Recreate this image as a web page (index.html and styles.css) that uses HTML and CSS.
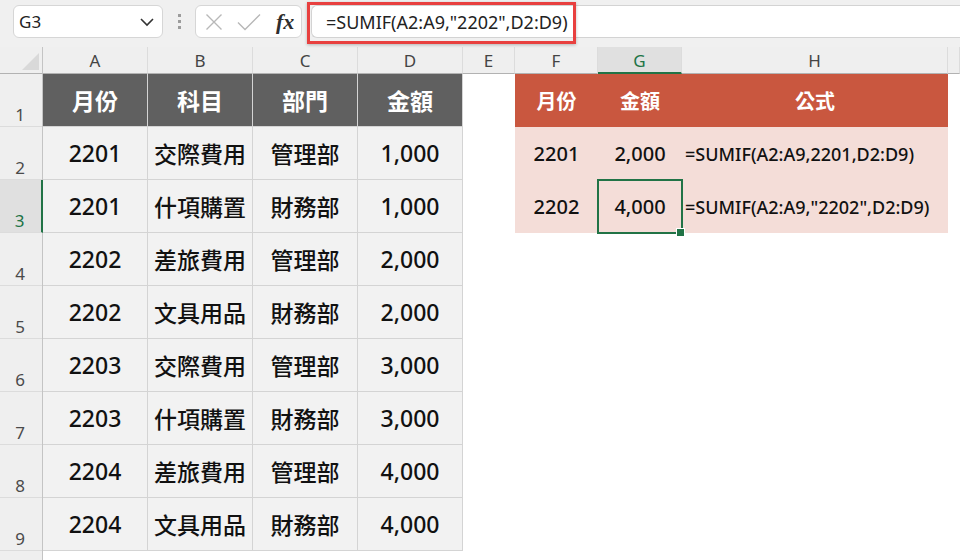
FILE: index.html
```html
<!DOCTYPE html>
<html>
<head>
<meta charset="utf-8">
<link rel="stylesheet" href="styles.css">
</head>
<body>
<div class="app">
  <div class="toolbar">
    <div class="namebox">
      <span class="nb-text">G3</span>
      <svg class="chev" width="16" height="10" viewBox="0 0 16 10"><path d="M2 2 L8 8 L14 2" fill="none" stroke="#333" stroke-width="1.6"/></svg>
    </div>
    <div class="grip"><i></i><i></i><i></i></div>
    <div class="fxgroup">
      <svg width="18" height="18" viewBox="0 0 18 18"><path d="M1.5 1.5 L16.5 16.5 M16.5 1.5 L1.5 16.5" stroke="#b8b8b8" stroke-width="1.4" fill="none"/></svg>
      <svg width="24" height="18" viewBox="0 0 24 18"><path d="M1 9.5 L8 16.5 L23 1.5" stroke="#b8b8b8" stroke-width="1.4" fill="none"/></svg>
      <span class="fx">fx</span>
    </div>
    <div class="formula">=SUMIF(A2:A9,"2202",D2:D9)</div>
    <div class="highlight"></div>
  </div>

  <div class="colheads">
    <div class="corner"><span class="tri"></span></div>
    <div class="ch">A</div>
    <div class="ch">B</div>
    <div class="ch">C</div>
    <div class="ch">D</div>
    <div class="ch">E</div>
    <div class="ch">F</div>
    <div class="ch sel">G</div>
    <div class="ch">H</div>
    <div class="ch"></div>
  </div>

  <div class="body">
    <div class="rowheads">
      <div class="rh">1</div>
      <div class="rh">2</div>
      <div class="rh sel">3</div>
      <div class="rh">4</div>
      <div class="rh">5</div>
      <div class="rh">6</div>
      <div class="rh">7</div>
      <div class="rh">8</div>
      <div class="rh">9</div>
      <div class="rh last"></div>
    </div>
    <div class="cells">
      <div class="ltable">
        <div class="c h">月份</div><div class="c h">科目</div><div class="c h">部門</div><div class="c h">金額</div>
        <div class="c">2201</div><div class="c">交際費用</div><div class="c">管理部</div><div class="c">1,000</div>
        <div class="c">2201</div><div class="c">什項購置</div><div class="c">財務部</div><div class="c">1,000</div>
        <div class="c">2202</div><div class="c">差旅費用</div><div class="c">管理部</div><div class="c">2,000</div>
        <div class="c">2202</div><div class="c">文具用品</div><div class="c">財務部</div><div class="c">2,000</div>
        <div class="c">2203</div><div class="c">交際費用</div><div class="c">管理部</div><div class="c">3,000</div>
        <div class="c">2203</div><div class="c">什項購置</div><div class="c">財務部</div><div class="c">3,000</div>
        <div class="c">2204</div><div class="c">差旅費用</div><div class="c">管理部</div><div class="c">4,000</div>
        <div class="c">2204</div><div class="c">文具用品</div><div class="c">財務部</div><div class="c">4,000</div>
      </div>
      <div class="rtable">
        <div class="r h">月份</div><div class="r h">金額</div><div class="r h">公式</div>
        <div class="r">2201</div><div class="r">2,000</div><div class="r f">=SUMIF(A2:A9,2201,D2:D9)</div>
        <div class="r">2202</div><div class="r">4,000</div><div class="r f">=SUMIF(A2:A9,"2202",D2:D9)</div>
      </div>
      <div class="selection"></div>
      <div class="handle"></div>
    </div>
  </div>
</div>
</body>
</html>
```

FILE: styles.css
```css
* { box-sizing: border-box; }
html, body { margin: 0; padding: 0; }
body {
  width: 960px;
  height: 560px;
  overflow: hidden;
  background: #ffffff;
  font-family: "Noto Sans", "Noto Sans CJK TC", sans-serif;
}
.app { width: 960px; height: 560px; overflow: hidden; }

/* toolbar */
.toolbar {
  position: relative;
  height: 47px;
  background: #f0f0f0;
  display: flex;
  align-items: flex-start;
  padding-top: 5px;
}
.namebox {
  margin-left: 13px;
  width: 150px;
  height: 33px;
  background: #fff;
  border: 1px solid #d6d6d6;
  border-radius: 6px;
  display: flex;
  align-items: center;
  justify-content: space-between;
  padding: 0 7px 0 5px;
}
.nb-text { font-size: 17px; color: #222; }
.grip {
  width: 32px;
  height: 33px;
  display: flex;
  flex-direction: column;
  align-items: center;
  justify-content: center;
  gap: 3px;
}
.grip i { display: block; width: 3px; height: 3px; background: #9c9c9c; }
.fxgroup {
  width: 107px;
  height: 33px;
  background: #fff;
  border: 1px solid #d6d6d6;
  border-radius: 6px;
  display: flex;
  align-items: center;
  padding-left: 9px;
  gap: 14px;
}
.fx {
  font-family: "Liberation Serif", serif;
  font-style: italic;
  font-weight: bold;
  font-size: 22px;
  color: #2e2e2e;
  margin-left: 1px;
  line-height: 1;
}
.formula {
  margin-left: 9px;
  flex: 1;
  height: 33px;
  background: #fff;
  border: 1px solid #d3d3d3;
  border-right: none;
  border-radius: 6px 0 0 6px;
  display: flex;
  align-items: center;
  padding-left: 14px;
  font-size: 18px;
  color: #222;
  white-space: nowrap;
}
.highlight {
  position: absolute;
  left: 307px;
  top: 2px;
  width: 269px;
  height: 42px;
  border: 3px solid #e8403f;
  box-shadow: 0 1px 3px rgba(0,0,0,0.25);
}

/* column headers */
.colheads {
  display: grid;
  grid-template-columns: 43px 105px 105px 105px 105px 52px 83px 84px 266px 1fr;
  height: 27px;
  background: #efefef;
}
.corner {
  position: relative;
  border-right: 1px solid #c4c4c4;
  border-bottom: 1px solid #b2b2b2;
}
.tri {
  position: absolute;
  right: 3px;
  bottom: 3px;
  width: 0;
  height: 0;
  border-left: 17px solid transparent;
  border-bottom: 17px solid #d9d9d9;
}
.ch {
  border-right: 1px solid #dcdcdc;
  border-bottom: 1px solid #b2b2b2;
  display: flex;
  align-items: center;
  justify-content: center;
  font-size: 17px;
  color: #444;
  padding-top: 1px;
}
.ch.sel {
  background: #e0e0e0;
  color: #217346;
  border-bottom: 2px solid #217346;
}

/* body */
.body { display: flex; height: 486px; }
.rowheads {
  width: 43px;
  display: flex;
  flex-direction: column;
  background: #efefef;
  border-right: 1px solid #c4c4c4;
}
.rh {
  height: 53px;
  flex: none;
  border-bottom: 1px solid #dcdcdc;
  display: flex;
  align-items: flex-end;
  justify-content: center;
  font-size: 17px;
  line-height: 17px;
  color: #4a4a4a;
  padding-bottom: 3px;
  padding-right: 2px;
}
.rh.sel {
  background: #e0e0e0;
  color: #217346;
  border-right: 2px solid #217346;
  margin-right: -1px;
}
.rh.last { height: 20px; border-bottom: none; }

.cells {
  position: relative;
  flex: 1;
  display: grid;
  grid-template-columns: 105px 105px 105px 105px 52px 83px 84px 266px 1fr;
  grid-template-rows: repeat(9, 53px) 1fr;
  background: #fff;
}
.ltable {
  grid-column: 1 / 5;
  grid-row: 1 / 10;
  display: grid;
  grid-template-columns: repeat(4, 105px);
  grid-auto-rows: 53px;
}
.c {
  background: #f2f2f2;
  border-right: 1px solid #d4d4d4;
  border-bottom: 1px solid #d4d4d4;
  display: flex;
  align-items: center;
  justify-content: center;
  font-size: 23px;
  font-weight: 500;
  color: #111;
  white-space: nowrap;
}
.c.h {
  background: #606060;
  color: #fff;
  font-weight: bold;
}
.rtable {
  grid-column: 6 / 9;
  grid-row: 1 / 4;
  display: grid;
  grid-template-columns: 83px 84px 266px;
  grid-auto-rows: 53px;
}
.r {
  background: #f4ddd8;
  display: flex;
  align-items: center;
  justify-content: center;
  font-size: 20px;
  font-weight: 500;
  color: #111;
  white-space: nowrap;
}
.r.h {
  background: #c9573f;
  color: #fff;
  font-weight: bold;
}
.r.f {
  justify-content: flex-start;
  padding-left: 3px;
  font-size: 18px;
}
.selection {
  position: absolute;
  left: 554px;
  top: 105px;
  width: 86px;
  height: 55px;
  border: 2px solid #217346;
}
.handle {
  position: absolute;
  left: 634px;
  top: 155px;
  width: 7px;
  height: 7px;
  background: #217346;
  box-shadow: 0 0 0 1px #fff;
}
```
